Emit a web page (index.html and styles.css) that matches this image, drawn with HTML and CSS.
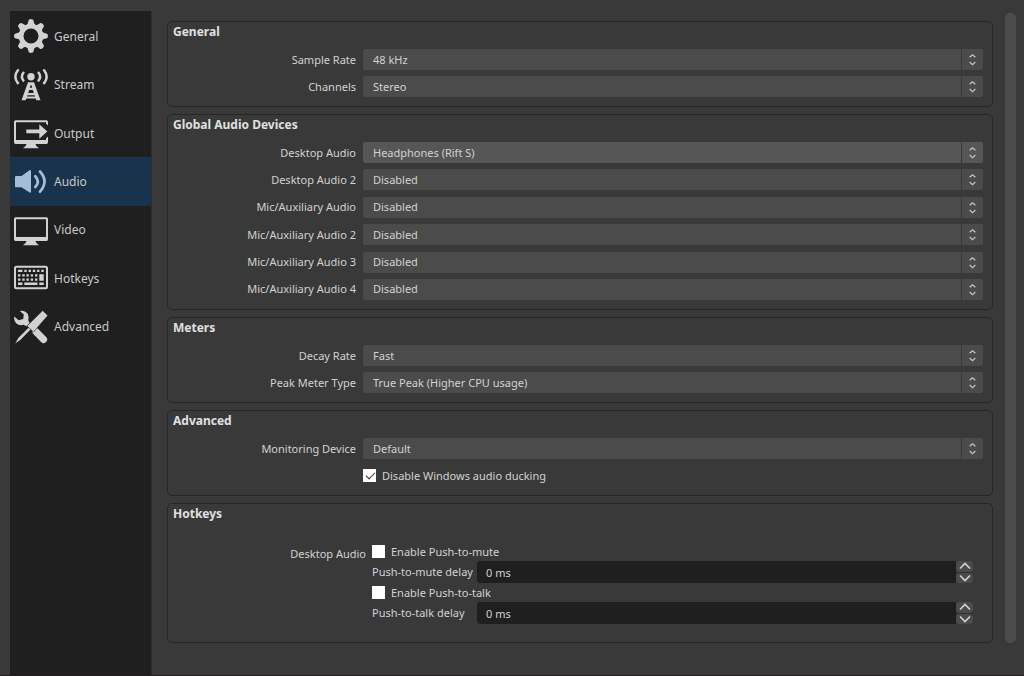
FILE: index.html
```html
<!DOCTYPE html>
<html lang="en">
<head>
<meta charset="utf-8">
<title>Settings</title>
<link rel="stylesheet" href="styles.css">
</head>
<body>
<svg class="defs" aria-hidden="true">
  <symbol id="updown" viewBox="0 0 22 21">
    <path d="M8 8.200 L11 5.500 L14 8.200 M8 13.200 L11 15.900 L14 13.200" fill="none" stroke="currentColor" stroke-width="1.300"/>
  </symbol>
  <symbol id="tooth" viewBox="0 0 34 34">
    <path d="M11.500 7.500 C13.600 5.500 14 4 14.400 1.700 Q14.800 0 17 0 Q19.200 0 19.600 1.700 C20 4 20.400 5.500 22.500 7.500Z"/>
  </symbol>
  <symbol id="stand" viewBox="0 0 34 34">
    <path d="M12.500 28 H21.500 Q21.800 30.500 25 32.300 H9 Q12.200 30.500 12.500 28Z"/>
  </symbol>
</svg>
<div class="window">
  <nav class="sidebar" aria-label="Settings sections">
    <ul class="nav-list">
      <li><a class="nav-item" href="#general">
        <svg class="nav-icon" viewBox="0 0 34 34" aria-hidden="true">
          <circle cx="17" cy="17" r="9.900" fill="none" stroke="currentColor" stroke-width="4.800"/>
          <use href="#tooth"/>
          <use href="#tooth" transform="rotate(45 17 17)"/>
          <use href="#tooth" transform="rotate(90 17 17)"/>
          <use href="#tooth" transform="rotate(135 17 17)"/>
          <use href="#tooth" transform="rotate(180 17 17)"/>
          <use href="#tooth" transform="rotate(225 17 17)"/>
          <use href="#tooth" transform="rotate(270 17 17)"/>
          <use href="#tooth" transform="rotate(315 17 17)"/>
        </svg>
        General</a></li>
      <li><a class="nav-item" href="#stream">
        <svg class="nav-icon" viewBox="0 0 34 34" aria-hidden="true">
          <circle cx="17" cy="8.700" r="3.700"/>
          <g fill="none" stroke="currentColor" stroke-width="2.500" stroke-linecap="round">
            <path d="M9.400 4.800 Q6.400 8.700 9.400 12.600"/>
            <path d="M24.600 4.800 Q27.600 8.700 24.600 12.600"/>
            <path d="M3.900 2.300 Q-1.200 8.700 3.900 15.100"/>
            <path d="M30.100 2.300 Q35.200 8.700 30.100 15.100"/>
          </g>
          <path fill-rule="evenodd" d="M14 14.300 H20 L26.500 32.300 H22.300 L21.700 30.600 H12.300 L11.700 32.300 H7.500 Z M16.500 17.300 L15.800 19.700 H18.200 L17.500 17.300 Z M15.200 21.900 L14.200 25 H19.800 L18.800 21.900 Z M13.400 27.300 L12.900 28.600 H21.100 L20.600 27.300Z"/>
        </svg>
        Stream</a></li>
      <li><a class="nav-item" href="#output">
        <svg class="nav-icon" viewBox="0 0 34 34" aria-hidden="true">
          <path d="M34 9.500 V6 Q34 4.300 32.500 4.300 H1.500 Q0 4.300 0 6 V26.300 Q0 28 1.500 28 H32.500 Q34 28 34 26.300 V20.500 L32 22.500 V24 H2 V6.300 H32 V7.500Z"/>
          <path d="M12.300 13.600 H25.300 V8.200 L33.300 15.400 L25.300 22.700 V17.300 H12.300Z"/>
          <use href="#stand"/>
        </svg>
        Output</a></li>
      <li><a class="nav-item nav-item-active" href="#audio" aria-current="page">
        <svg class="nav-icon" viewBox="0 0 34 34" aria-hidden="true">
          <path d="M1 13 Q1 12 2 12 H7.500 L15.500 6.200 Q17 5.500 17 7 V27.700 Q17 29.200 15.500 28.400 L7.500 23.200 H2 Q1 23.200 1 22.200Z"/>
          <g fill="none" stroke="currentColor" stroke-width="2.700" stroke-linecap="round">
            <path d="M21.300 12.200 Q26.300 17.500 21.300 23"/>
            <path d="M26 7.500 Q35 17.500 26 27.700"/>
          </g>
        </svg>
        Audio</a></li>
      <li><a class="nav-item" href="#video">
        <svg class="nav-icon" viewBox="0 0 34 34" aria-hidden="true">
          <path fill-rule="evenodd" d="M1.500 4.300 H32.500 Q34 4.300 34 6 V26.300 Q34 28 32.500 28 H1.500 Q0 28 0 26.300 V6 Q0 4.300 1.500 4.300Z M2 6.300 V24 H32 V6.300Z"/>
          <use href="#stand"/>
        </svg>
        Video</a></li>
      <li><a class="nav-item" href="#hotkeys">
        <svg class="nav-icon" viewBox="0 0 34 34" aria-hidden="true">
          <rect x="1" y="5.700" width="32" height="21.600" rx="1.500" fill="none" stroke="currentColor" stroke-width="2"/>
          <path d="M4 8.800h4.400v2.300H4z M10.300 8.800h2.400v2.300h-2.400z M14.600 8.800H17v2.300h-2.400z M18.800 8.800h2.400v2.300h-2.400z M23 8.800h2.400v2.300H23z M27.300 8.800h2.400v2.300h-2.400z
            M4 13.200h2.400v2.300H4z M8.300 13.200h2.400v2.300H8.300z M12.400 13.200h2.400v2.300h-2.400z M16.700 13.200h2.400v2.300h-2.400z M21 13.200h2.400v2.300H21z M25.300 13.200h4.400v6.500h-4.400z
            M4 17.400h2.400v2.300H4z M8.300 17.400h2.400v2.300H8.300z M12.400 17.400h2.400v2.300h-2.400z M16.700 17.400h2.400v2.300h-2.400z M21 17.400h2.400v2.300H21z
            M4 21.600h4.400v2.300H4z M10.300 21.600h13.100v2.300H10.300z M25.300 21.600h4.400v2.300h-4.400z"/>
        </svg>
        Hotkeys</a></li>
      <li><a class="nav-item" href="#advanced">
        <svg class="nav-icon" viewBox="0 0 34 34" aria-hidden="true">
          <path d="M5.800 1 Q10.500 -0.300 13.300 3.200 Q15.400 6.500 14.200 10.300 L15.600 13 L12.500 16.200 L9.600 14.800 Q5.500 16 2.400 13.500 Q-0.500 10.500 0.300 6.600 L4.600 10.200 L9.200 9 L9.800 4.600Z"/>
          <path d="M22 21.800 L29.600 29.500" stroke="currentColor" stroke-width="7" stroke-linecap="round"/>
          <path d="M28.700 0.500 L33.800 5.600 L19.500 22 L13 16Z" stroke="#1f1f1f" stroke-width="0.600"/>
          <path d="M14.600 17.800 L16.500 19.600 L6.500 29.800 L1.200 33.600 L4.500 27.700Z"/>
        </svg>
        Advanced</a></li>
    </ul>
  </nav>

  <main class="content">
    <section class="panel" id="general">
      <h2 class="panel-title">General</h2>
      <div class="rows">
        <div class="row"><label for="rate">Sample Rate</label>
          <div class="combo"><select id="rate"><option>48 kHz</option></select><svg aria-hidden="true"><use href="#updown"/></svg></div></div>
        <div class="row"><label for="channels">Channels</label>
          <div class="combo"><select id="channels"><option>Stereo</option></select><svg aria-hidden="true"><use href="#updown"/></svg></div></div>
      </div>
    </section>

    <section class="panel" id="audio">
      <h2 class="panel-title">Global Audio Devices</h2>
      <div class="rows rows-devices">
        <div class="row"><label for="desk1">Desktop Audio</label>
          <div class="combo combo-hover"><select id="desk1"><option>Headphones (Rift S)</option></select><svg aria-hidden="true"><use href="#updown"/></svg></div></div>
        <div class="row"><label for="desk2">Desktop Audio 2</label>
          <div class="combo"><select id="desk2"><option>Disabled</option></select><svg aria-hidden="true"><use href="#updown"/></svg></div></div>
        <div class="row"><label for="mic1">Mic/Auxiliary Audio</label>
          <div class="combo"><select id="mic1"><option>Disabled</option></select><svg aria-hidden="true"><use href="#updown"/></svg></div></div>
        <div class="row"><label for="mic2">Mic/Auxiliary Audio 2</label>
          <div class="combo"><select id="mic2"><option>Disabled</option></select><svg aria-hidden="true"><use href="#updown"/></svg></div></div>
        <div class="row"><label for="mic3">Mic/Auxiliary Audio 3</label>
          <div class="combo"><select id="mic3"><option>Disabled</option></select><svg aria-hidden="true"><use href="#updown"/></svg></div></div>
        <div class="row"><label for="mic4">Mic/Auxiliary Audio 4</label>
          <div class="combo"><select id="mic4"><option>Disabled</option></select><svg aria-hidden="true"><use href="#updown"/></svg></div></div>
      </div>
    </section>

    <section class="panel">
      <h2 class="panel-title">Meters</h2>
      <div class="rows">
        <div class="row"><label for="decay">Decay Rate</label>
          <div class="combo"><select id="decay"><option>Fast</option></select><svg aria-hidden="true"><use href="#updown"/></svg></div></div>
        <div class="row"><label for="peak">Peak Meter Type</label>
          <div class="combo"><select id="peak"><option>True Peak (Higher CPU usage)</option></select><svg aria-hidden="true"><use href="#updown"/></svg></div></div>
      </div>
    </section>

    <section class="panel" id="advanced">
      <h2 class="panel-title">Advanced</h2>
      <div class="rows">
        <div class="row"><label for="monitor">Monitoring Device</label>
          <div class="combo"><select id="monitor"><option>Default</option></select><svg aria-hidden="true"><use href="#updown"/></svg></div></div>
        <div class="row"><label class="check check-offset"><input type="checkbox" checked>Disable Windows audio ducking</label></div>
      </div>
    </section>

    <section class="panel panel-hotkeys" id="hotkeys">
      <h2 class="panel-title">Hotkeys</h2>
      <div class="hotkeys" role="group" aria-labelledby="hk-device">
        <span class="hotkeys-device" id="hk-device">Desktop Audio</span>
        <div class="hotkeys-grid">
          <label class="check check-wide"><input type="checkbox">Enable Push-to-mute</label>
          <label for="mute-delay">Push-to-mute delay</label>
          <div class="spin">
            <input id="mute-delay" type="text" value="0 ms">
            <div class="spin-buttons">
              <button type="button" aria-label="Increase mute delay"><svg viewBox="0 0 16 10"><path d="M3 7.500 L8 2.500 L13 7.500"/></svg></button>
              <button type="button" aria-label="Decrease mute delay"><svg viewBox="0 0 16 10"><path d="M3 2.500 L8 7.500 L13 2.500"/></svg></button>
            </div>
          </div>
          <label class="check check-wide"><input type="checkbox">Enable Push-to-talk</label>
          <label for="talk-delay">Push-to-talk delay</label>
          <div class="spin">
            <input id="talk-delay" type="text" value="0 ms">
            <div class="spin-buttons">
              <button type="button" aria-label="Increase talk delay"><svg viewBox="0 0 16 10"><path d="M3 7.500 L8 2.500 L13 7.500"/></svg></button>
              <button type="button" aria-label="Decrease talk delay"><svg viewBox="0 0 16 10"><path d="M3 2.500 L8 7.500 L13 2.500"/></svg></button>
            </div>
          </div>
        </div>
      </div>
    </section>
  </main>
  <div class="scrollbar" aria-hidden="true"></div>
</div>
</body>
</html>
```
FILE: styles.css
```css
* { box-sizing: border-box; }

body {
  margin: 0;
  background: #393939;
  color: #d2d2d2;
  font: 11px/16px Tahoma, "Noto Sans", sans-serif;
}

.defs { position: absolute; width: 0; height: 0; }

.window {
  display: flex;
  min-height: 100vh;
  padding: 11px 8px 0 10px;
  border-bottom: 1px solid #261d22;
}

.sidebar {
  flex: 0 0 142px;
  padding-top: 1px;
  background: #1f1f1f;
  border-right: 1px solid #2d2d2d;
  font: 12px/17px "Segoe UI", "Noto Sans", sans-serif;
}

.nav-list {
  display: grid;
  grid-template-rows: repeat(7, 1fr);
  height: 339px;
  margin: 0;
  padding: 0;
  list-style: none;
}

.nav-item {
  display: flex;
  align-items: center;
  gap: 6px;
  height: 100%;
  padding-left: 4px;
  color: #c8c8c8;
  text-decoration: none;
}

.nav-item-active { background: #19334c; }

.nav-icon {
  width: 34px;
  height: 34px;
  color: #d2d2d2;
  fill: currentColor;
}

.nav-item-active .nav-icon { color: #a2bdd9; }

.content {
  flex: 1;
  display: flex;
  flex-direction: column;
  gap: 7px;
  padding: 10px 12px 32px 15px;
}

.panel {
  padding: 2px 9px 9px 5px;
  border: 1px solid #272727;
  border-radius: 5px;
}

.panel-title {
  margin: 0 0 9px;
  color: #e0e0e0;
  font: bold 12px/16px Tahoma, "Noto Sans", sans-serif;
}

.rows {
  display: flex;
  flex-direction: column;
  justify-content: space-between;
  gap: 6px;
}

.rows-devices { min-height: 158px; }

.row {
  display: grid;
  grid-template-columns: 183px 1fr;
  column-gap: 7px;
  align-items: center;
  min-height: 21px;
}

.row > label:first-child:not(.check) { text-align: right; }

.combo { display: grid; grid-template-columns: 1fr 22px; }

.combo select {
  grid-area: 1 / 1 / 2 / 3;
  appearance: none;
  width: 100%;
  height: 21px;
  padding: 0 32px 0 10px;
  border: 0;
  border-radius: 2px;
  background: #4b4b4b;
  color: inherit;
  font: inherit;
}

.combo svg {
  grid-area: 1 / 2;
  width: 22px;
  height: 21px;
  border-left: 1px solid #3a3a3a;
  color: #c4c4c4;
  pointer-events: none;
}

.combo-hover select { background: #565656; }

.check { display: flex; align-items: center; gap: 6px; }
.check-offset { grid-column: 2; }

.check input {
  appearance: none;
  display: grid;
  width: 13px;
  height: 13px;
  margin: 0;
  background: #fff;
}

.check input:checked::after {
  content: "";
  width: 8px;
  height: 4px;
  margin: 3px;
  border: solid #333;
  border-width: 0 0 1px 1px;
  transform: rotate(-45deg);
}

.panel-hotkeys { padding-bottom: 18px; }

.hotkeys {
  display: grid;
  grid-template-columns: 193px 1fr;
  column-gap: 6px;
  padding: 10px 10px 0 0;
}

.hotkeys-device { padding-top: 5px; text-align: right; }

.hotkeys-grid {
  display: grid;
  grid-template-columns: 105px 1fr;
  grid-template-rows: 19px 22px 19px 22px;
  align-items: center;
  padding-top: 1px;
}

.check-wide { grid-column: 1 / 3; }

.spin { display: flex; }

.spin input {
  flex: 1;
  min-width: 0;
  height: 22px;
  padding: 0 9px;
  border: 0;
  border-radius: 3px 0 0 3px;
  background: #1f1f1f;
  color: inherit;
  font: inherit;
}

.spin-buttons { display: grid; gap: 1px; width: 17px; background: #303030; border-radius: 3px; }

.spin button {
  display: flex;
  justify-content: center;
  align-items: center;
  min-height: 0;
  padding: 0;
  border: 0;
  border-radius: 3px;
  background: #4b4b4b;
}

.spin button svg {
  width: 16px;
  height: 10px;
  fill: none;
  stroke: #d2d2d2;
  stroke-width: 1.6;
}

.scrollbar {
  flex: 0 0 11px;
  margin: 2px 0 32px;
  border-radius: 5px;
  background: #4c4c4c;
}
```
